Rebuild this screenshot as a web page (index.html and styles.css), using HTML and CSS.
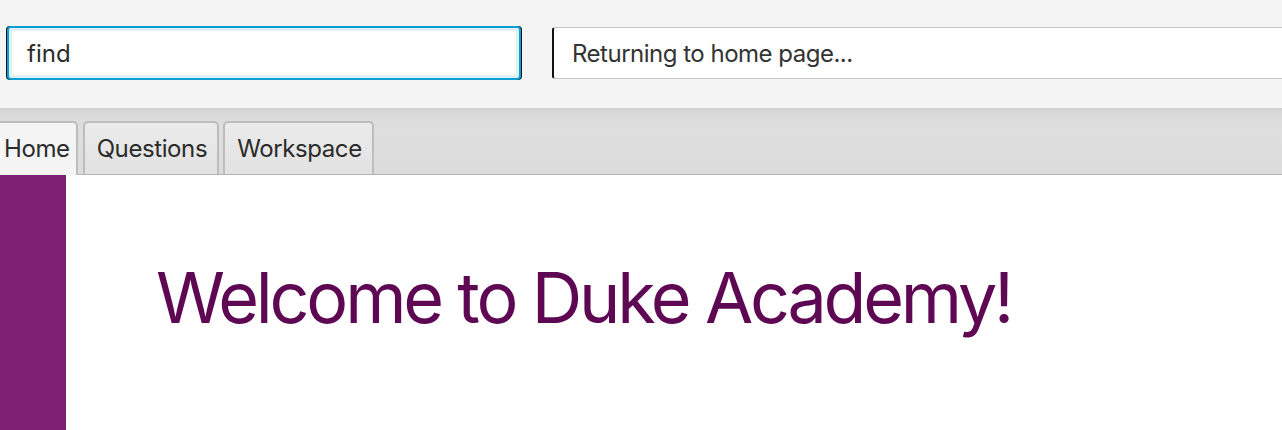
FILE: index.html
```html
<!DOCTYPE html>
<html>
<head>
<meta charset="utf-8">
<link rel="stylesheet" href="styles.css">
</head>
<body>
<div class="toolbar">
  <div class="field field-find"><span class="field-text">find</span></div>
  <div class="field field-status"><span class="field-text">Returning to home page...</span></div>
</div>
<div class="tabbar">
  <div class="tab tab-selected">Home</div>
  <div class="tab">Questions</div>
  <div class="tab">Workspace</div>
</div>
<div class="content">
  <div class="sidebar"></div>
  <div class="main">
    <h1 class="welcome">Welcome to Duke Academy!</h1>
  </div>
</div>
</body>
</html>
```
FILE: styles.css
```css
html, body {
  margin: 0;
  padding: 0;
  background: #ffffff;
  overflow: hidden;
  font-family: Inter, "Noto Sans", sans-serif;
}
.toolbar {
  box-sizing: border-box;
  height: 110px;
  background: #f4f4f4;
  display: flex;
  align-items: center;
  padding: 0 0 2px 7px;
  gap: 31px;
  border-bottom: 2px solid #d2d2d2;
  white-space: nowrap;
}
.field {
  box-sizing: border-box;
  height: 54px;
  display: flex;
  align-items: center;
  background: #ffffff;
  font-size: 24px;
  color: #2b2b2b;
  flex: none;
}
.field-find {
  width: 514px;
  border: 2px solid #0a9ed6;
  border-radius: 4px;
  box-shadow: inset 0 0 0 3px #dff0f8, -1px 0 0 #111, 1px 0 0 #111;
  padding-left: 18px;
}
.field-status {
  width: 760px;
  height: 52px;
  border: 1px solid #c4c4c4;
  border-left: 2px solid #111;
  border-radius: 3px 0 0 3px;
  padding-left: 18px;
  letter-spacing: -0.5px;
  color: #333333;
}
.tabbar {
  height: 65px;
  background: linear-gradient(#d6d6d6, #dedede 20%, #dcdcdc);
  display: flex;
  align-items: flex-end;
  gap: 4px;
  border-bottom: 1px solid #b4b4b4;
  box-sizing: border-box;
}
.tab {
  box-sizing: border-box;
  height: 53px;
  padding: 0 10px 0 12px;
  display: flex;
  align-items: center;
  font-size: 24px;
  letter-spacing: -0.4px;
  color: #2b2b2b;
  background: linear-gradient(#ebebeb, #e2e2e2);
  border: 2px solid #bdbdbd;
  border-bottom: none;
  border-radius: 5px 5px 0 0;
}
.tab-selected {
  padding: 0 6px 1px 4px;
  border-left: none;
  border-radius: 0 5px 0 0;
  background: #f4f4f4;
  height: 54px;
  margin-bottom: -1px;
  margin-right: 1px;
}
.content {
  display: flex;
  height: 260px;
}
.sidebar {
  width: 66px;
  flex: none;
  background: #7e2173;
}
.main {
  padding-left: 90px;
}
.welcome {
  margin: 80px 0 0 0;
  font-weight: 400;
  font-size: 70px;
  color: #5e0753;
  letter-spacing: -3.2px;
  white-space: nowrap;
}
```
